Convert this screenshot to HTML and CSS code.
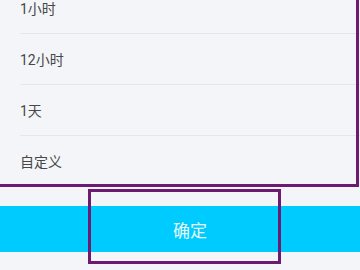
FILE: index.html
```html
<!DOCTYPE html>
<html lang="zh-CN">
<head>
<meta charset="utf-8">
<link rel="stylesheet" href="styles.css">
</head>
<body>
<div class="page">
  <div class="list">
    <div class="row">1小时</div>
    <div class="row">12小时</div>
    <div class="row">1天</div>
    <div class="row last">自定义</div>
  </div>
  <div class="actions">
    <button class="confirm">确定</button>
  </div>
  <div class="mark mark-list"></div>
  <div class="mark mark-btn"></div>
</div>
</body>
</html>
```
FILE: styles.css
```css
html, body {
  margin: 0;
  padding: 0;
}
body {
  background: #f4f5f8;
  font-family: Roboto, "Noto Sans CJK SC", sans-serif;
  width: 360px;
  height: 270px;
  overflow: hidden;
}
.page {
  position: relative;
  display: flow-root;
  height: 270px;
}
.list {
  margin-top: -17px;
  display: flex;
  flex-direction: column;
}
.row {
  margin-left: 20px;
  height: 50px;
  border-bottom: 1px solid #e5e6ea;
  display: flex;
  align-items: center;
  font-size: 14px;
  color: #474747;
}
.row.last {
  border-bottom: none;
}
.actions {
  padding-top: 20px;
}
.confirm {
  display: block;
  width: 100%;
  height: 46px;
  border: none;
  margin: 0;
  padding: 0 0 0 20px;
  background: #00cbfe;
  color: #e8fbff;
  font-family: Roboto, "Noto Sans CJK SC", sans-serif;
  font-size: 17px;
}
.mark {
  position: absolute;
  border: 3px solid #6d1b72;
  box-sizing: border-box;
}
.mark-list {
  left: -10px;
  top: -10px;
  width: 369px;
  height: 197px;
}
.mark-btn {
  left: 88px;
  top: 189px;
  width: 193px;
  height: 75px;
}
```
